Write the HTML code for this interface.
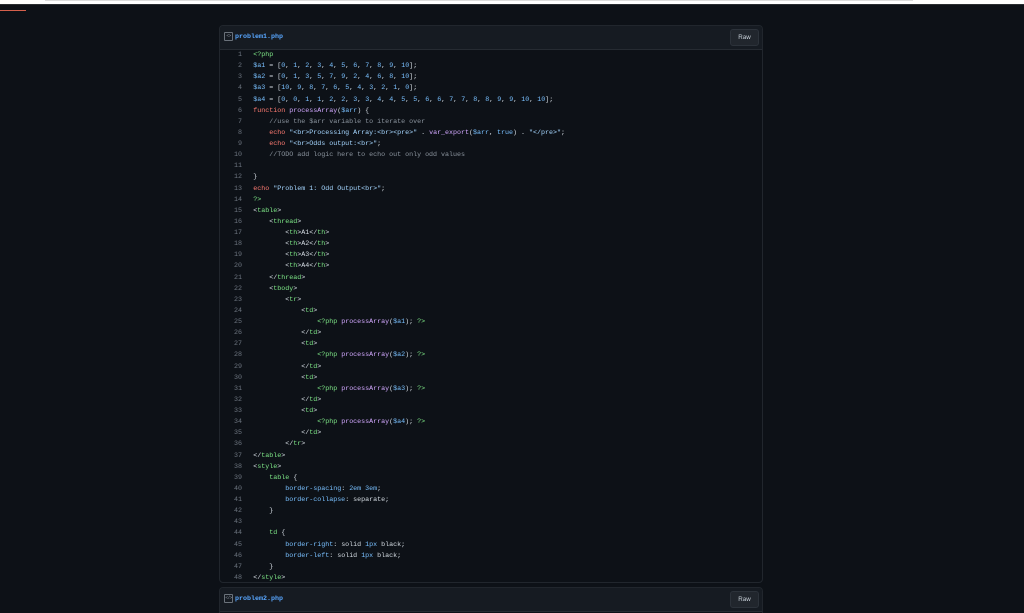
<!DOCTYPE html>
<html lang="en">
<head>
<meta charset="utf-8">
<title>problem1.php</title>
<style>
html,body{margin:0;padding:0;width:1024px;height:613px;overflow:hidden;background:#0d1117;}
body{position:relative;font-family:"Liberation Mono",monospace;}
.top{position:absolute;left:0;top:0;width:1024px;height:4px;background:#fff;}
.top2{position:absolute;left:45px;top:0;width:868px;height:1px;background:#dcdcdc;}
.top4{position:absolute;left:0;top:4px;width:1024px;height:1px;background:#2a2d31;}
.red{position:absolute;left:0;top:10px;width:26px;height:1.4px;background:#d5604c;}
.card{position:absolute;left:219px;width:544px;box-sizing:border-box;border:1px solid #21262d;border-radius:4px;background:#0d1117;overflow:hidden;}
.head{position:absolute;left:0;top:0;width:100%;height:23px;background:#161b22;border-bottom:1px solid #262b32;}
.ico{position:absolute;left:4px;top:6px;width:9px;height:9px;box-sizing:border-box;border:1px solid #6b727b;border-radius:1px;color:#8b949e;font-size:4.5px;line-height:7px;text-align:center;letter-spacing:-.6px;filter:blur(.2px);}
.name{position:absolute;left:15px;top:5px;font-size:6.67px;line-height:12px;font-weight:bold;color:#58a6ff;white-space:pre;filter:blur(.2px);}
.raw{position:absolute;right:3px;top:3px;width:29px;height:17px;box-sizing:border-box;border:1px solid #2c323a;border-radius:3px;background:#21262d;color:#c9d1d9;font:6.2px/15px "Liberation Sans",sans-serif;text-align:center;filter:blur(.2px);}
.nums,.code{position:absolute;top:24px;margin:0;font-family:"Liberation Mono",monospace;font-size:6.67px;line-height:11.13px;white-space:pre;filter:blur(.25px);}
.nums{left:0;width:22px;text-align:right;color:#6e7681;}
.code{left:33.3px;color:#d5dce3;}
.b{color:#79c0ff}.r{color:#ff7b72}.p{color:#d2a8ff}.g{color:#7ee787}.s{color:#a5d6ff}.c{color:#8b949e}
</style>
</head>
<body>
<div class="top"></div><div class="top2"></div><div class="top4"></div>
<div class="red"></div>

<div class="card" style="top:25px;height:558px;">
<div class="head">
<div class="ico">&lt;&gt;</div>
<div class="name">problem1.php</div>
<div class="raw">Raw</div>
</div>
<pre class="nums">1
2
3
4
5
6
7
8
9
10
11
12
13
14
15
16
17
18
19
20
21
22
23
24
25
26
27
28
29
30
31
32
33
34
35
36
37
38
39
40
41
42
43
44
45
46
47
48</pre>
<pre class="code"><span class="g">&lt;?php</span>
<span class="b">$a1</span> = [<span class="b">0</span>, <span class="b">1</span>, <span class="b">2</span>, <span class="b">3</span>, <span class="b">4</span>, <span class="b">5</span>, <span class="b">6</span>, <span class="b">7</span>, <span class="b">8</span>, <span class="b">9</span>, <span class="b">10</span>];
<span class="b">$a2</span> = [<span class="b">0</span>, <span class="b">1</span>, <span class="b">3</span>, <span class="b">5</span>, <span class="b">7</span>, <span class="b">9</span>, <span class="b">2</span>, <span class="b">4</span>, <span class="b">6</span>, <span class="b">8</span>, <span class="b">10</span>];
<span class="b">$a3</span> = [<span class="b">10</span>, <span class="b">9</span>, <span class="b">8</span>, <span class="b">7</span>, <span class="b">6</span>, <span class="b">5</span>, <span class="b">4</span>, <span class="b">3</span>, <span class="b">2</span>, <span class="b">1</span>, <span class="b">0</span>];
<span class="b">$a4</span> = [<span class="b">0</span>, <span class="b">0</span>, <span class="b">1</span>, <span class="b">1</span>, <span class="b">2</span>, <span class="b">2</span>, <span class="b">3</span>, <span class="b">3</span>, <span class="b">4</span>, <span class="b">4</span>, <span class="b">5</span>, <span class="b">5</span>, <span class="b">6</span>, <span class="b">6</span>, <span class="b">7</span>, <span class="b">7</span>, <span class="b">8</span>, <span class="b">8</span>, <span class="b">9</span>, <span class="b">9</span>, <span class="b">10</span>, <span class="b">10</span>];
<span class="r">function</span> <span class="p">processArray</span>(<span class="b">$arr</span>) {
    <span class="c">//use the $arr variable to iterate over</span>
    <span class="r">echo</span> <span class="s">"&lt;br&gt;Processing Array:&lt;br&gt;&lt;pre&gt;"</span> . <span class="p">var_export</span>(<span class="b">$arr</span>, <span class="b">true</span>) . <span class="s">"&lt;/pre&gt;"</span>;
    <span class="r">echo</span> <span class="s">"&lt;br&gt;Odds output:&lt;br&gt;"</span>;
    <span class="c">//TODO add logic here to echo out only odd values</span>

}
<span class="r">echo</span> <span class="s">"Problem 1: Odd Output&lt;br&gt;"</span>;
<span class="g">?&gt;</span>
&lt;<span class="g">table</span>&gt;
    &lt;<span class="g">thread</span>&gt;
        &lt;<span class="g">th</span>&gt;A1&lt;/<span class="g">th</span>&gt;
        &lt;<span class="g">th</span>&gt;A2&lt;/<span class="g">th</span>&gt;
        &lt;<span class="g">th</span>&gt;A3&lt;/<span class="g">th</span>&gt;
        &lt;<span class="g">th</span>&gt;A4&lt;/<span class="g">th</span>&gt;
    &lt;/<span class="g">thread</span>&gt;
    &lt;<span class="g">tbody</span>&gt;
        &lt;<span class="g">tr</span>&gt;
            &lt;<span class="g">td</span>&gt;
                <span class="g">&lt;?php</span> <span class="p">processArray</span>(<span class="b">$a1</span>); <span class="g">?&gt;</span>
            &lt;/<span class="g">td</span>&gt;
            &lt;<span class="g">td</span>&gt;
                <span class="g">&lt;?php</span> <span class="p">processArray</span>(<span class="b">$a2</span>); <span class="g">?&gt;</span>
            &lt;/<span class="g">td</span>&gt;
            &lt;<span class="g">td</span>&gt;
                <span class="g">&lt;?php</span> <span class="p">processArray</span>(<span class="b">$a3</span>); <span class="g">?&gt;</span>
            &lt;/<span class="g">td</span>&gt;
            &lt;<span class="g">td</span>&gt;
                <span class="g">&lt;?php</span> <span class="p">processArray</span>(<span class="b">$a4</span>); <span class="g">?&gt;</span>
            &lt;/<span class="g">td</span>&gt;
        &lt;/<span class="g">tr</span>&gt;
&lt;/<span class="g">table</span>&gt;
&lt;<span class="g">style</span>&gt;
    <span class="g">table</span> {
        <span class="b">border-spacing</span>: <span class="b">2em 3em</span>;
        <span class="b">border-collapse</span>: separate;
    }

    <span class="g">td</span> {
        <span class="b">border-right</span>: solid <span class="b">1px</span> black;
        <span class="b">border-left</span>: solid <span class="b">1px</span> black;
    }
&lt;/<span class="g">style</span>&gt;</pre>
</div>

<div class="card" style="top:587px;height:40px;">
<div class="head">
<div class="ico">&lt;/&gt;</div>
<div class="name">problem2.php</div>
<div class="raw">Raw</div>
</div>
</div>
</body>
</html>
